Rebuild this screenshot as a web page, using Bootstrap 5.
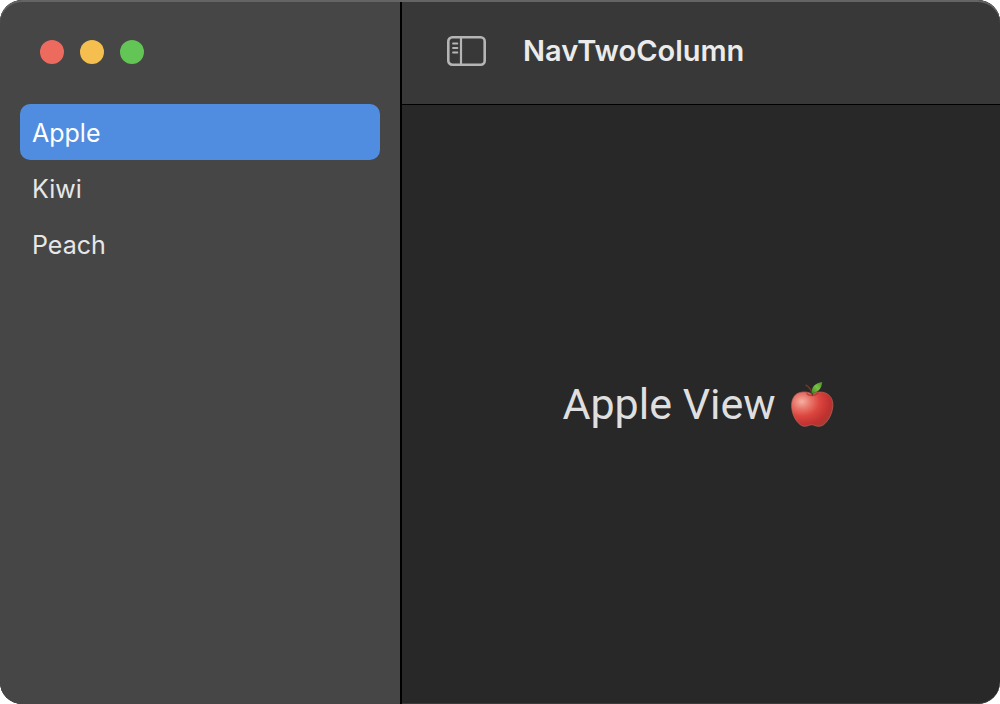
<!DOCTYPE html>
<html lang="en">
<head>
<meta charset="utf-8">
<meta name="viewport" content="width=device-width, initial-scale=1">
<title>NavTwoColumn</title>
<link href="https://cdn.jsdelivr.net/npm/bootstrap@5.3.0/dist/css/bootstrap.min.css" rel="stylesheet">
<style>
  body { font-family: Inter, "Liberation Sans", sans-serif; background: #fff; }
  .app-window { border-radius: 22px; background: #282828; box-shadow: inset 0 -1px #3c3c3c; }
  .app-window::before { content: ""; position: absolute; inset: 0; border-radius: inherit; box-shadow: inset 0 2px #646464; pointer-events: none; }
  .sidebar { width: 402px; background: #464646; border-right: 2px solid #000; padding: 40px 20px 20px; }
  .lights { gap: 16px; padding: 0 20px; margin-bottom: 40px; }
  .light { width: 24px; height: 24px; }
  .light-close { background: #ed6a5f; }
  .light-min { background: #f5bf4f; }
  .light-zoom { background: #62c555; }
  .fruit-list .list-group-item { background: transparent; color: #e7e7e7; font-size: 25px; line-height: 32px; padding: 13px 12px 11px; border-radius: 10px; }
  .fruit-list .list-group-item.active { background: #508de0; color: #fff; }
  .titlebar { height: 105px; background: #383838; border-bottom: 1px solid #000; padding: 0 44px 2px; gap: 35px; }
  .titlebar h1 { font-size: 29px; line-height: 36px; font-weight: 600; color: #ebebeb; }
  .detail-text { font-family: Roboto, Inter, sans-serif; font-size: 43px; line-height: 52px; color: #dfdfdf; gap: 12px; padding: 0 4px 2px 0; }
</style>
</head>
<body>
<div class="app-window position-relative d-flex vh-100 overflow-hidden">
  <aside class="sidebar flex-shrink-0">
    <div class="lights d-flex">
      <button type="button" class="light light-close rounded-circle border-0 p-0" aria-label="Close"></button>
      <button type="button" class="light light-min rounded-circle border-0 p-0" aria-label="Minimize"></button>
      <button type="button" class="light light-zoom rounded-circle border-0 p-0" aria-label="Zoom"></button>
    </div>
    <nav class="fruit-list list-group list-group-flush">
      <a href="#apple" class="list-group-item border-0 active" aria-current="page">Apple</a>
      <a href="#kiwi" class="list-group-item border-0">Kiwi</a>
      <a href="#peach" class="list-group-item border-0">Peach</a>
    </nav>
  </aside>
  <div class="d-flex flex-column flex-grow-1">
    <header class="titlebar d-flex align-items-center">
      <button type="button" class="btn border-0 p-0 d-flex" aria-label="Toggle sidebar">
        <svg width="42" height="32" viewBox="0 0 42 32" fill="none" stroke="#b5b5b5">
          <rect x="2.3" y="2.3" width="36.4" height="27.4" rx="4" stroke-width="2.6"/>
          <path d="M15 2v28" stroke-width="2.2"/>
          <path d="M7 8.5h4.400M7 13h4.400M7 17.500h4.400" stroke-width="1.8" stroke-linecap="round"/>
        </svg>
      </button>
      <h1 class="mb-0">NavTwoColumn</h1>
    </header>
    <main class="flex-grow-1 d-flex align-items-center justify-content-center">
      <div class="detail-text d-flex align-items-center">
        <span>Apple View</span>
        <svg width="48" height="48" viewBox="0 0 48 48" role="img" aria-label="Red apple">
          <defs>
            <radialGradient id="skin" cx=".25" cy=".28" r=".85">
              <stop offset="0" stop-color="#f5b0a2"/>
              <stop offset=".25" stop-color="#e9756a"/>
              <stop offset=".5" stop-color="#db463f"/>
              <stop offset=".8" stop-color="#c03130"/>
              <stop offset="1" stop-color="#a93a30"/>
            </radialGradient>
            <linearGradient id="leaf" x1="0" y1="1" x2="1" y2="0">
              <stop offset="0" stop-color="#3f8b22"/>
              <stop offset=".5" stop-color="#7cc043"/>
              <stop offset="1" stop-color="#3d9426"/>
            </linearGradient>
          </defs>
          <path d="M24 14C28 12 33 11.200 38 13.200C43 15.500 45.300 20.500 44.800 26.500C44.200 34 40.200 41.500 35.200 45C32 46.900 29 46.500 26.800 45.500C25 44.600 22.500 44.600 20.500 45.500C17.500 46.800 14.500 46.500 12 44.500C7 40.500 3.600 33 3.600 25.500C3.600 19.500 6 14.800 10.500 13C15.500 11.200 20.500 12 24 14Z" fill="url(#skin)" stroke="#bd655a" stroke-width=".7"/>
          <path d="M18.500 13.500C21 16.200 27 16.200 30 13.200" fill="none" stroke="#aa3029" stroke-width="1.500" opacity=".7"/>
          <path d="M24.500 15C23.800 11 21.500 7.500 18 5.200" fill="none" stroke="#70372b" stroke-width="1.500" stroke-linecap="round"/>
          <path d="M24 13C22.800 6.500 28 3 34.200 2C33.500 8.500 30.500 12.500 24 13Z" fill="url(#leaf)"/>
        </svg>
      </div>
    </main>
  </div>
</div>
<script src="https://cdn.jsdelivr.net/npm/bootstrap@5.3.0/dist/js/bootstrap.bundle.min.js"></script>
</body>
</html>
